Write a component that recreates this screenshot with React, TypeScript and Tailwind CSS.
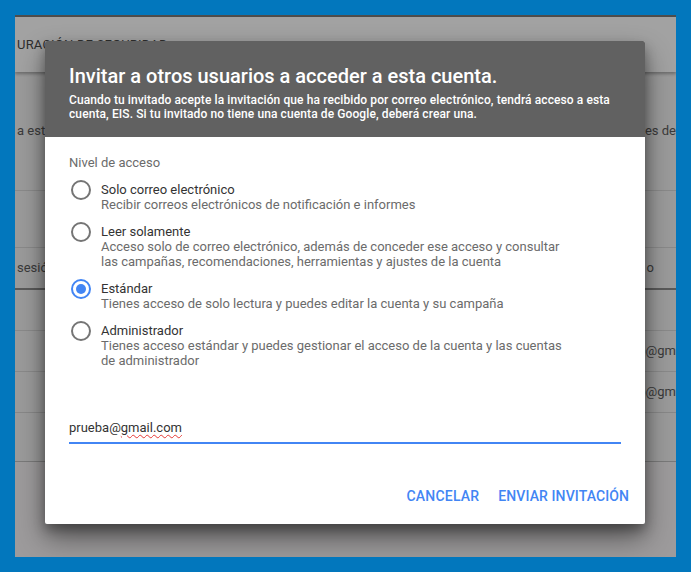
import React from "react";

const font = { fontFamily: "Roboto, 'Noto Sans', Arial, sans-serif" };

function Radio({ checked }: { checked?: boolean }) {
  return (
    <div
      className={`mt-[-2.5px] ml-[2px] flex h-[20px] w-[20px] shrink-0 items-center justify-center rounded-full border-2 ${
        checked ? "border-[#4285f4]" : "border-[#757575]"
      }`}
    >
      {checked && <div className="h-[10px] w-[10px] rounded-full bg-[#4285f4]" />}
    </div>
  );
}

function Option({
  label,
  desc,
  checked,
}: {
  label: string;
  desc: React.ReactNode;
  checked?: boolean;
}) {
  return (
    <div className="flex items-start gap-[10px]">
      <Radio checked={checked} />
      <div className="text-[13px] leading-[15px]">
        <div className="text-[#333333]">{label}</div>
        <div className="text-[#6b6b6b]">{desc}</div>
      </div>
    </div>
  );
}

export default function App() {
  return (
    <div
      className="h-[572px] w-[691px] overflow-hidden bg-[#0277bd] p-[15px] pb-[15px]"
      style={font}
    >
      <div className="relative h-[542px] w-[661px] overflow-hidden bg-[#9b9b9b]">
        {/* page background (dimmed) */}
        <div className="flex h-full flex-col">
          <div className="h-[2px] bg-[#4d4d4d] shadow-[0_1px_3px_rgba(0,0,0,0.4)]" />
          <div className="flex h-[55px] items-center bg-[#a2a2a2] pl-[2px] text-[13px] text-[#2e2e2e] shadow-[0_2px_3px_rgba(0,0,0,0.3)]">
            <span className="tracking-[0.2px]">URACIÓN DE SEGURIDAD</span>
          </div>
          <div className="flex h-[119px] items-center justify-between border-b border-[#8a8a8a] text-[13px] text-[#3a3a3a]">
            <span className="pl-[2px]">a está</span>
            <span className="pr-[0px]">tes de</span>
          </div>
          <div className="h-[57px] border-b border-[#8a8a8a]" />
          <div className="flex h-[42px] items-center justify-between border-b-2 border-[#5a5a5a] text-[13px] text-[#3a3a3a]">
            <span className="pl-[2px]">sesión</span>
            <span className="pr-[22px]">o</span>
          </div>
          <div className="h-[41px] border-b border-[#8a8a8a]" />
          <div className="flex h-[41px] items-center justify-end border-b border-[#8a8a8a] text-[13px] text-[#3a3a3a]">
            <span className="pr-[0px]">b@gm</span>
          </div>
          <div className="flex h-[41px] items-center justify-end border-b border-[#8a8a8a] text-[13px] text-[#3a3a3a]">
            <span className="pr-[0px]">b@gm</span>
          </div>
          <div className="h-[49px] border-b border-[#7a7a7a] shadow-[0_2px_3px_rgba(0,0,0,0.25)]" />
          <div className="flex-1 bg-[#9d9b9c]" />
        </div>

        {/* dialog */}
        <div className="absolute left-[30px] top-[26px] w-[600px] overflow-hidden rounded-[2px] bg-white shadow-[0_14px_28px_rgba(0,0,0,0.45),0_6px_12px_rgba(0,0,0,0.3)]">
          <div className="bg-[#616161] px-[24px] pb-[16px] pt-[23px] text-white">
            <div className="text-[20px] font-medium leading-[24px]">
              Invitar a otros usuarios a acceder a esta cuenta.
            </div>
            <div className="mt-[5px] text-[12px] font-medium leading-[14px] tracking-[0.1px]">
              Cuando tu invitado acepte la invitación que ha recibido por correo electrónico, tendrá acceso a esta
              <br />
              cuenta, EIS. Si tu invitado no tiene una cuenta de Google, deberá crear una.
            </div>
          </div>
          <div className="px-[24px] pt-[18px]">
            <div className="text-[13px] leading-[15px] text-[#6b6b6b]">Nivel de acceso</div>
            <div className="mt-[12px] flex flex-col gap-[12px]">
              <Option
                label="Solo correo electrónico"
                desc="Recibir correos electrónicos de notificación e informes"
              />
              <Option
                label="Leer solamente"
                desc={
                  <>
                    Acceso solo de correo electrónico, además de conceder ese acceso y consultar
                    <br />
                    las campañas, recomendaciones, herramientas y ajustes de la cuenta
                  </>
                }
              />
              <Option
                checked
                label="Estándar"
                desc="Tienes acceso de solo lectura y puedes editar la cuenta y su campaña"
              />
              <Option
                label="Administrador"
                desc={
                  <>
                    Tienes acceso estándar y puedes gestionar el acceso de la cuenta y las cuentas
                    <br />
                    de administrador
                  </>
                }
              />
            </div>
            <div className="mt-[52px] w-[552px] border-b-2 border-[#4285f4] pb-[6px] text-[13px] leading-[16px] text-[#333333]">
              prueba@
              <span className="underline decoration-[#e53935] decoration-wavy decoration-[1px] underline-offset-[2px]">
                gmail.com
              </span>
            </div>
          </div>
          <div className="flex justify-end gap-[3px] px-[8px] pb-[20px] pt-[44px]">
            <button className="px-[8px] text-[14px] font-medium uppercase leading-[16px] tracking-[0.2px] text-[#4285f4]">
              Cancelar
            </button>
            <button className="px-[8px] text-[14px] font-medium uppercase leading-[16px] tracking-[0.1px] text-[#4285f4]">
              Enviar invitación
            </button>
          </div>
        </div>
      </div>
    </div>
  );
}
